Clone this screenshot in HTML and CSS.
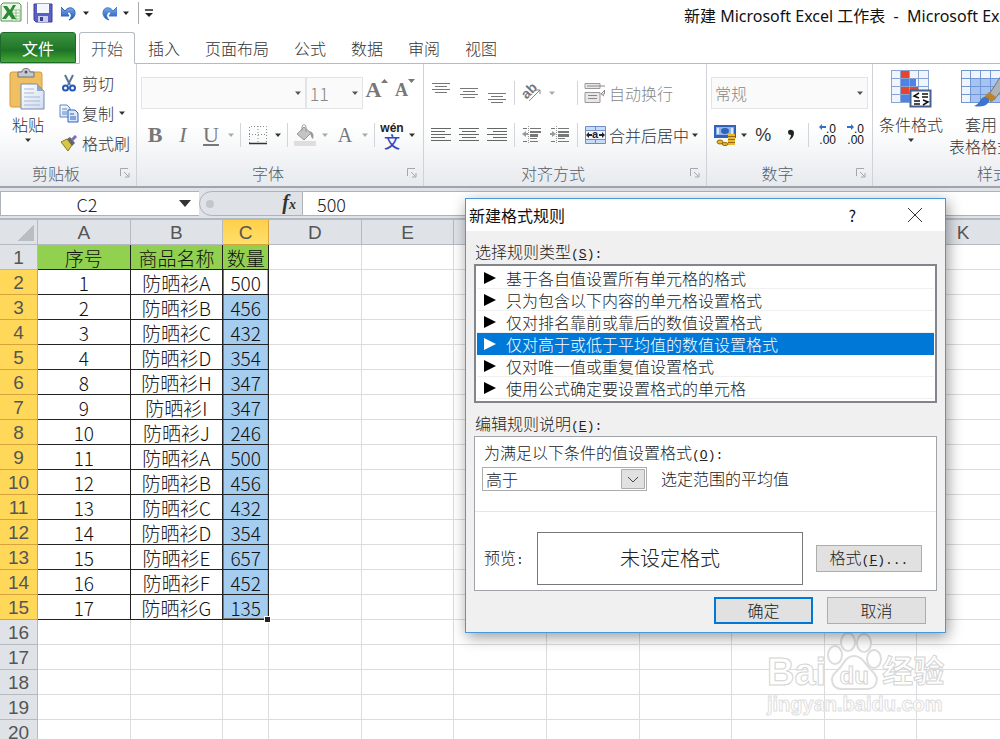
FILE: index.html
```
<!DOCTYPE html>
<html lang="zh-CN">
<head>
    <meta charset="UTF-8">
    <meta name="viewport" content="width=device-width, initial-scale=1.0">
    <title>新建 Microsoft Excel 工作表</title>
    <link rel="stylesheet" href="styles.css">
</head>
<body>
    <!-- shared shapes -->
    <svg class="defs" width="0" height="0">
        <defs>
            <symbol id="arrow" viewBox="0 0 8 5"><path d="M1 .5h6L4 4z" fill="currentColor"/></symbol>
            <symbol id="launcher" viewBox="0 0 10 10"><path d="M.5 8V.5H8M4 4l4.5 4.5M9 5v4H5" fill="none" stroke="#a3a8af"/></symbol>
            <linearGradient id="blue" x1="0" y1="0" x2="0" y2="1"><stop offset="0" stop-color="#7fb0ee"/><stop offset="1" stop-color="#1d4fae"/></linearGradient>
            <linearGradient id="paper" x1="0" y1="0" x2="1" y2="1"><stop offset="0" stop-color="#fff"/><stop offset="1" stop-color="#cfdcf0"/></linearGradient>
        </defs>
    </svg>

    <header class="titlebar">
        <div class="quick">
            <svg width="22" height="22" viewBox="0 0 22 22">
                <path d="M3 1h16l2 2v16H1V3z" fill="#eef6ea" stroke="#4d9a4c"/>
                <path d="M12 8h8v11h-8z" fill="#fff" stroke="#8cbf86"/>
                <path d="M13 11h6M13 14h6M13 17h6M16 8v11" stroke="#8cbf86"/>
                <path d="M3 4h4l3 4 3-5h3l-4 7 4 7h-4l-3-4-3 4H2l5-7z" fill="#2c8a34"/>
            </svg>
            <span class="bar"></span>
            <button type="button" aria-label="保存"><svg width="20" height="20" viewBox="0 0 20 20">
                <path d="M1 1h18v18H3l-2-2z" fill="#5a5fc4" stroke="#3d3f94"/>
                <path d="M4 1h12v9H4z" fill="#f2f6fd"/>
                <path d="M5 13h10v6H5z" fill="#c9cfe8"/>
                <path d="M7 14h3v4H7z" fill="#3d3f94"/>
            </svg></button>
            <button type="button" class="arc" aria-label="撤消"><svg width="16" height="18" viewBox="0 0 16 18">
                <path d="M4 7c3-5 10-4 10 2 0 3-2 6-6 7 2-2 3-4 2-6-1-3-3-2-4-1l2 3H0V3z" fill="url(#blue)" stroke="#2f64b8"/>
            </svg></button>
            <svg class="caret" width="8" height="5"><use href="#arrow"/></svg>
            <button type="button" class="arc" aria-label="恢复"><svg width="16" height="18" viewBox="0 0 16 18">
                <path d="M12 7C9 2 2 3 2 9c0 3 2 6 6 7-2-2-3-4-2-6 1-3 3-2 4-1l-2 3h8V3z" fill="url(#blue)" stroke="#3f7bcf"/>
            </svg></button>
            <svg class="caret" width="8" height="5"><use href="#arrow"/></svg>
            <span class="bar"></span>
            <svg width="10" height="8" viewBox="0 0 10 8"><path d="M1 1h8" stroke="#222" stroke-width="1.5"/><path d="M1 4h8L5 8z" fill="#222"/></svg>
        </div>
        <h1>新建 Microsoft Excel 工作表 &nbsp;-&nbsp; Microsoft Excel</h1>
    </header>

    <nav class="tabs">
        <button type="button" class="tab file">文件</button>
        <button type="button" class="tab active">开始</button>
        <button type="button" class="tab">插入</button>
        <button type="button" class="tab">页面布局</button>
        <button type="button" class="tab">公式</button>
        <button type="button" class="tab">数据</button>
        <button type="button" class="tab">审阅</button>
        <button type="button" class="tab">视图</button>
    </nav>

    <div class="ribbon">
        <section class="group clipboard">
            <div class="group-body split">
                <button type="button" class="big">
                    <svg width="38" height="42" viewBox="0 0 38 42">
                        <rect x="1" y="4" width="32" height="35" rx="2" fill="#f0bf62" stroke="#d39b3c"/>
                        <path d="M9 4h4c0-5 8-5 8 0h4v5H9z" fill="#c5c9cf" stroke="#6e7177"/>
                        <circle cx="17" cy="4" r="1.5" fill="#555"/>
                        <path d="M12 16h16l7 7v18H12z" fill="url(#paper)" stroke="#7489ad"/>
                        <path d="M28 16v7h7z" fill="#8ea7cf"/>
                        <path d="M15 21h10M15 25h10M15 29h16M15 33h16M15 37h16" stroke="#a9b8d2"/>
                    </svg>
                    <span>粘贴</span>
                    <svg width="8" height="5"><use href="#arrow"/></svg>
                </button>
                <div class="stack">
                    <button type="button" class="line"><span class="ico"><svg width="14" height="18" viewBox="0 0 14 18">
                        <path d="M3 1l5 10M11 1L6 11" stroke="#5b7597" stroke-width="2"/>
                        <circle cx="3.500" cy="14" r="2.500" fill="none" stroke="#2458b8" stroke-width="2"/>
                        <circle cx="10.500" cy="14" r="2.500" fill="none" stroke="#2458b8" stroke-width="2"/>
                    </svg></span>剪切</button>
                    <button type="button" class="line"><span class="ico"><svg width="20" height="19" viewBox="0 0 20 19">
                        <path d="M1 1h7l3 3v9H1z" fill="url(#paper)" stroke="#5b86c4"/>
                        <path d="M3 5h5M3 8h5M3 10h5" stroke="#5b86c4"/>
                        <path d="M9 6h7l3 3v9H9z" fill="#dce8fa" stroke="#2e62b5"/>
                        <path d="M11 10h4M11 13h6M11 15h6" stroke="#2e62b5"/>
                    </svg></span>复制<svg class="after" width="8" height="5"><use href="#arrow"/></svg></button>
                    <button type="button" class="line"><span class="ico"><svg width="18" height="17" viewBox="0 0 18 17">
                        <path d="M1 7l6-3 5 6-4 6z" fill="#d8c548" stroke="#8a7a22"/>
                        <path d="M7 4l3-2 5 6-3 3z" fill="#666"/>
                        <path d="M12 5l4-4" stroke="#7f6cc0" stroke-width="3"/>
                    </svg></span>格式刷</button>
                </div>
            </div>
            <footer>剪贴板<svg width="10" height="10"><use href="#launcher"/></svg></footer>
        </section>

        <section class="group font">
            <div class="group-body">
                <div class="tools">
                    <button type="button" class="combo name" aria-label="字体"><span></span><svg width="8" height="5"><use href="#arrow"/></svg></button>
                    <button type="button" class="combo size" aria-label="字号"><span>11</span><svg width="8" height="5"><use href="#arrow"/></svg></button>
                    <button type="button" class="tool letter large" aria-label="增大字号">A<svg width="7" height="4" viewBox="0 0 7 4"><path d="M0 4h7L3.500 0z" fill="#777"/></svg></button>
                    <button type="button" class="tool letter small" aria-label="减小字号">A<svg width="7" height="4" viewBox="0 0 7 4"><path d="M0 0h7L3.500 4z" fill="#777"/></svg></button>
                </div>
                <div class="tools">
                    <button type="button" class="tool letter"><b>B</b></button>
                    <button type="button" class="tool letter"><i>I</i></button>
                    <button type="button" class="tool letter"><u>U</u></button>
                    <span class="drop dim"><svg width="8" height="5"><use href="#arrow"/></svg></span>
                    <span class="bar"></span>
                    <button type="button" class="tool" aria-label="边框"><svg width="18" height="19" viewBox="0 0 18 19">
                        <path d="M.5 17V.5h17V17M9 0v17M0 8.500h18" fill="none" stroke="#888" stroke-dasharray="1 2"/>
                        <path d="M0 17.500h18" stroke="#333" stroke-width="1.500"/>
                    </svg></button>
                    <span class="drop"><svg width="8" height="5"><use href="#arrow"/></svg></span>
                    <span class="bar"></span>
                    <button type="button" class="tool" aria-label="填充颜色"><svg width="22" height="22" viewBox="0 0 22 22">
                        <path d="M0 17h22v5H0z" fill="#e2dce1"/>
                        <path d="M3 10l7-7 7 6-7 7z" fill="#c4c4c4" stroke="#999"/>
                        <path d="M8 7V3c0-3 4-3 4 0v5" fill="none" stroke="#999"/>
                        <path d="M15 7c5 1 5 5 4 8-2-1-2-4-4-8z" fill="#999"/>
                    </svg></button>
                    <span class="drop dim"><svg width="8" height="5"><use href="#arrow"/></svg></span>
                    <button type="button" class="tool letter plain">A</button>
                    <span class="drop dim"><svg width="8" height="5"><use href="#arrow"/></svg></span>
                    <span class="bar"></span>
                    <button type="button" class="tool pinyin"><span>wén</span><em>文</em></button>
                    <span class="drop"><svg width="8" height="5"><use href="#arrow"/></svg></span>
                </div>
            </div>
            <footer>字体<svg width="10" height="10"><use href="#launcher"/></svg></footer>
        </section>

        <section class="group align">
            <div class="group-body">
                <div class="tools">
                    <button type="button" class="tool" aria-label="顶端对齐"><svg width="20" height="22" viewBox="0 0 20 22"><path d="M1 1.500h18M4 4.500h12M1 7.500h18M4 10.500h12" stroke="#777"/></svg></button>
                    <button type="button" class="tool" aria-label="垂直居中"><svg width="20" height="22" viewBox="0 0 20 22"><path d="M1 6.500h18M4 9.500h12M1 12.500h18M4 15.500h12" stroke="#777"/></svg></button>
                    <button type="button" class="tool" aria-label="底端对齐"><svg width="20" height="22" viewBox="0 0 20 22"><path d="M1 11.500h18M4 14.500h12M1 17.500h18M4 20.500h12" stroke="#777"/></svg></button>
                    <span class="bar"></span>
                    <span class="pair">
                        <button type="button" class="tool" aria-label="方向"><svg width="20" height="20" viewBox="0 0 20 20">
                            <g transform="rotate(-45 8 9)"><text x="0" y="12" font-size="14" font-weight="700" font-family="Liberation Sans, sans-serif" fill="#777">ab</text></g>
                            <path d="M7 18L18 7M14 7h4v4" fill="none" stroke="#888"/>
                        </svg></button>
                        <span class="drop dim"><svg width="8" height="5"><use href="#arrow"/></svg></span>
                    </span>
                    <span class="bar"></span>
                    <button type="button" class="wide muted"><span class="tool"><svg width="22" height="22" viewBox="0 0 22 22">
                        <path d="M1 1.500h15v5H1zM1 10.500h15v10H1z" fill="#ece6ec" stroke="#999"/>
                        <path d="M3 4h18M20.500 8v4h-2M20 9l-3 3 3 2M4 13.500h9M4 16.500h9" fill="none" stroke="#888"/>
                    </svg></span>自动换行</button>
                </div>
                <div class="tools">
                    <button type="button" class="tool" aria-label="左对齐"><svg width="20" height="16" viewBox="0 0 20 16"><path d="M0 1.500h20M0 4.500h14M0 7.500h20M0 10.500h14M0 13.500h20" stroke="#666"/></svg></button>
                    <button type="button" class="tool" aria-label="居中"><svg width="20" height="16" viewBox="0 0 20 16"><path d="M0 1.500h20M3 4.500h14M0 7.500h20M3 10.500h14M0 13.500h20" stroke="#666"/></svg></button>
                    <button type="button" class="tool" aria-label="右对齐"><svg width="20" height="16" viewBox="0 0 20 16"><path d="M0 1.500h20M6 4.500h14M0 7.500h20M6 10.500h14M0 13.500h20" stroke="#666"/></svg></button>
                    <span class="bar"></span>
                    <button type="button" class="tool" aria-label="减少缩进"><svg width="20" height="18" viewBox="0 0 20 18">
                        <path d="M1 2.500h4M8 2.500h11M8 12.500h7M1 15.500h4M8 15.500h8" stroke="#777"/>
                        <path d="M8 5h11v2H8zM8 8h8v3H8z" fill="#777"/><path d="M0 8l4-3v2h2v2H4v2z" fill="#999"/><path d="M6.500 0v18" stroke="#999" stroke-dasharray="1 1"/>
                    </svg></button>
                    <button type="button" class="tool" aria-label="增加缩进"><svg width="20" height="18" viewBox="0 0 20 18">
                        <path d="M1 2.500h4M8 2.500h11M8 12.500h7M1 15.500h4M8 15.500h11" stroke="#777"/>
                        <path d="M8 5h11v2H8zM8 8h11v3H8z" fill="#777"/><path d="M6 8L2 5v2H0v2h2v2z" fill="#999"/><path d="M6.500 0v18" stroke="#999" stroke-dasharray="1 1"/>
                    </svg></button>
                    <span class="bar"></span>
                    <button type="button" class="wide"><span class="tool"><svg width="21" height="18" viewBox="0 0 21 18">
                        <path d="M.5 .5h20v17H.5z" fill="#c8dcf5" stroke="#6f8fc4"/>
                        <path d="M10.500 0v5M10.500 13v5M0 4.500h21M0 13.500h21" stroke="#6f8fc4"/>
                        <path d="M1 5h19v8H1z" fill="#eef5ff"/>
                        <path d="M1 9l3-3v2h3v2H4v2zM20 9l-3-3v2h-3v2h3v2z" fill="#223"/>
                        <text x="7" y="12" font-size="11" font-weight="700" font-family="Liberation Sans, sans-serif" fill="#223">a</text>
                    </svg></span>合并后居中</button>
                    <span class="drop"><svg width="8" height="5"><use href="#arrow"/></svg></span>
                </div>
            </div>
            <footer>对齐方式<svg width="10" height="10"><use href="#launcher"/></svg></footer>
        </section>

        <section class="group number">
            <div class="group-body">
                <div class="tools">
                    <button type="button" class="combo format"><span>常规</span><svg width="8" height="5"><use href="#arrow"/></svg></button>
                </div>
                <div class="tools">
                    <button type="button" class="tool" aria-label="会计数字格式"><svg width="22" height="22" viewBox="0 0 22 22">
                        <path d="M0 1h22v13H0z" fill="#2f62b8"/><path d="M2 3h18v8H2z" fill="#8fb4e8"/>
                        <ellipse cx="11" cy="7" rx="4" ry="3" fill="#2f62b8"/><path d="M4 4v6M18 4v6" stroke="#dce9fb" stroke-width="2"/>
                        <path d="M14 10h7v11h-7z" fill="#e8b92c"/><path d="M14 12.500h7M14 15.500h7M14 18.500h7" stroke="#96690c"/>
                        <ellipse cx="6" cy="18" rx="3" ry="2" fill="#e8b92c" stroke="#96690c"/><ellipse cx="11" cy="20" rx="3" ry="1.500" fill="#e8b92c" stroke="#96690c"/>
                    </svg></button>
                    <span class="drop"><svg width="8" height="5"><use href="#arrow"/></svg></span>
                    <button type="button" class="tool percent">%</button>
                    <button type="button" class="tool" aria-label="千位分隔样式"><svg width="8" height="12" viewBox="0 0 8 12"><path d="M1 3c0-3 6-3 6 1 0 3-2 6-5 7 1-2 2-3 2-5-2 0-3-1-3-3z" fill="#222"/></svg></button>
                    <span class="bar"></span>
                    <button type="button" class="tool decimals"><span><svg width="7" height="6" viewBox="0 0 7 6"><path d="M0 3l3-3v2h4v2H3v2z" fill="#2f6fd0"/></svg>.0</span><span>.00</span></button>
                    <button type="button" class="tool decimals"><span><svg width="7" height="6" viewBox="0 0 7 6"><path d="M7 3L4 0v2H0v2h4v2z" fill="#2f6fd0"/></svg>.0</span><span>.00</span></button>
                </div>
            </div>
            <footer>数字<svg width="10" height="10"><use href="#launcher"/></svg></footer>
        </section>

        <section class="group styles">
            <div class="group-body split">
                <button type="button" class="big rules-button">
                    <svg width="42" height="42" viewBox="0 0 42 42">
                        <path d="M1 2h38v33H1z" fill="#f0f5fd"/>
                        <path d="M11 2h9v9h-9z" fill="#e8432e"/><path d="M11 11h15v8H11z" fill="#4f82e2"/>
                        <path d="M11 19h17v8H11z" fill="#e8432e"/><path d="M11 27h8v8h-8z" fill="#4f82e2"/>
                        <path d="M1.500 2v33M10.500 2v33M19.500 2v33M28.500 2v33M38.500 2v33M1 2.500h38M1 10.500h38M1 18.500h38M1 26.500h38M1 34.500h38" stroke="#87a4d3" fill="none"/>
                        <path d="M20.500 22.500h20v16h-20z" fill="#fff" stroke="#44618f" stroke-width="2"/>
                        <path d="M29 25l-5 3 5 2M32 26h6M32 29h6M33 32l5 2-5 3M24 33h6M24 36h6" fill="none" stroke="#111" stroke-width="1.500"/>
                    </svg>
                    <span>条件格式</span>
                    <svg width="8" height="5"><use href="#arrow"/></svg>
                </button>
                <button type="button" class="big format-button">
                    <svg width="42" height="42" viewBox="0 0 42 42">
                        <path d="M1 2h41v33H1z" fill="#f0f5fd"/><path d="M11 11h31v24H11z" fill="#a6c4f3"/>
                        <path d="M1.500 2v33M10.500 2v33M20.500 2v33M30.500 2v33M40.500 2v33M1 2.500h41M1 10.500h41M1 18.500h41M1 26.500h41M1 34.500h41" stroke="#7096d4" fill="none"/>
                        <path d="M28 28L41 8v15l-7 9z" fill="#aeb3b8" stroke="#777"/>
                        <path d="M24 29l5-5 7 5-4 5z" fill="#b8832c"/>
                        <path d="M14 38c6-2 6-8 10-9 4 0 7 3 4 6-3 4-9 4-14 3z" fill="#3d74cd"/>
                    </svg>
                    <span>套用<br>表格格式</span>
                </button>
            </div>
            <footer>样式</footer>
        </section>
    </div>

    <div class="formula-bar">
        <div class="name-box">
            <input type="text" value="C2" aria-label="名称框">
            <svg width="12" height="7" viewBox="0 0 12 7"><path d="M0 0h12L6 7z" fill="#333"/></svg>
        </div>
        <div class="fx"><span class="knob"></span><i>f<small>x</small></i></div>
        <input class="formula" type="text" value="500" aria-label="编辑栏">
    </div>

    <main class="sheet">
        <table>
            <colgroup>
                <col class="c-head"><col class="c-wide"><col class="c-wide"><col class="c-narrow">
                <col class="c-wide" span="8">
            </colgroup>
            <thead>
                <tr><th class="corner"></th><th>A</th><th>B</th><th class="on">C</th><th>D</th><th>E</th><th>F</th><th>G</th><th>H</th><th>I</th><th>J</th><th>K</th></tr>
            </thead>
            <tbody>
                <tr class="titles"><th>1</th><td>序号</td><td>商品名称</td><td>数量</td><td></td><td></td><td></td><td></td><td></td><td></td><td></td><td></td></tr>
                <tr class="data first"><th>2</th><td>1</td><td>防晒衫A</td><td>500</td><td></td><td></td><td></td><td></td><td></td><td></td><td></td><td></td></tr>
                <tr class="data"><th>3</th><td>2</td><td>防晒衫B</td><td>456</td><td></td><td></td><td></td><td></td><td></td><td></td><td></td><td></td></tr>
                <tr class="data"><th>4</th><td>3</td><td>防晒衫C</td><td>432</td><td></td><td></td><td></td><td></td><td></td><td></td><td></td><td></td></tr>
                <tr class="data"><th>5</th><td>4</td><td>防晒衫D</td><td>354</td><td></td><td></td><td></td><td></td><td></td><td></td><td></td><td></td></tr>
                <tr class="data"><th>6</th><td>8</td><td>防晒衫H</td><td>347</td><td></td><td></td><td></td><td></td><td></td><td></td><td></td><td></td></tr>
                <tr class="data"><th>7</th><td>9</td><td>防晒衫I</td><td>347</td><td></td><td></td><td></td><td></td><td></td><td></td><td></td><td></td></tr>
                <tr class="data"><th>8</th><td>10</td><td>防晒衫J</td><td>246</td><td></td><td></td><td></td><td></td><td></td><td></td><td></td><td></td></tr>
                <tr class="data"><th>9</th><td>11</td><td>防晒衫A</td><td>500</td><td></td><td></td><td></td><td></td><td></td><td></td><td></td><td></td></tr>
                <tr class="data"><th>10</th><td>12</td><td>防晒衫B</td><td>456</td><td></td><td></td><td></td><td></td><td></td><td></td><td></td><td></td></tr>
                <tr class="data"><th>11</th><td>13</td><td>防晒衫C</td><td>432</td><td></td><td></td><td></td><td></td><td></td><td></td><td></td><td></td></tr>
                <tr class="data"><th>12</th><td>14</td><td>防晒衫D</td><td>354</td><td></td><td></td><td></td><td></td><td></td><td></td><td></td><td></td></tr>
                <tr class="data"><th>13</th><td>15</td><td>防晒衫E</td><td>657</td><td></td><td></td><td></td><td></td><td></td><td></td><td></td><td></td></tr>
                <tr class="data"><th>14</th><td>16</td><td>防晒衫F</td><td>452</td><td></td><td></td><td></td><td></td><td></td><td></td><td></td><td></td></tr>
                <tr class="data last"><th>15</th><td>17</td><td>防晒衫G</td><td>135<span class="handle"></span></td><td></td><td></td><td></td><td></td><td></td><td></td><td></td><td></td></tr>
                <tr><th>16</th><td></td><td></td><td></td><td></td><td></td><td></td><td></td><td></td><td></td><td></td><td></td></tr>
                <tr><th>17</th><td></td><td></td><td></td><td></td><td></td><td></td><td></td><td></td><td></td><td></td><td></td></tr>
                <tr><th>18</th><td></td><td></td><td></td><td></td><td></td><td></td><td></td><td></td><td></td><td></td><td></td></tr>
                <tr><th>19</th><td></td><td></td><td></td><td></td><td></td><td></td><td></td><td></td><td></td><td></td><td></td></tr>
                <tr><th>20</th><td></td><td></td><td></td><td></td><td></td><td></td><td></td><td></td><td></td><td></td><td></td></tr>
            </tbody>
        </table>
    </main>

    <div class="watermark">
        <div class="brand">
            <span>Bai</span>
            <span class="paw">
                <svg width="56" height="60" viewBox="0 0 56 60" fill="#fff" stroke="#ddd" stroke-width="2">
                    <ellipse cx="9" cy="23" rx="7" ry="9"/><ellipse cx="22" cy="10" rx="7" ry="9"/>
                    <ellipse cx="38" cy="11" rx="7" ry="9"/><ellipse cx="48" cy="27" rx="7" ry="9"/>
                    <path d="M28 24c9 0 11 9 18 15 9 8 4 18-5 18H16C6 57 2 46 11 39c7-6 8-15 17-15z"/>
                </svg>
                <em>du</em>
            </span>
            <span>经验</span>
        </div>
        <div class="site">jingyan.baidu.com</div>
    </div>

    <div class="dialog" role="dialog" aria-labelledby="dialog-title">
        <div class="dialog-title">
            <h2 id="dialog-title">新建格式规则</h2>
            <button type="button">?</button>
            <button type="button" aria-label="关闭"><svg width="14" height="14" viewBox="0 0 14 14"><path d="M0 0l14 14M14 0L0 14" stroke="#333"/></svg></button>
        </div>
        <div class="dialog-body">
            <p id="type-label">选择规则类型<span class="key">(<u>S</u>):</span></p>
            <ul class="rules" role="listbox" aria-labelledby="type-label">
                <li role="option">基于各自值设置所有单元格的格式</li>
                <li role="option">只为包含以下内容的单元格设置格式</li>
                <li role="option">仅对排名靠前或靠后的数值设置格式</li>
                <li role="option" aria-selected="true" class="selected">仅对高于或低于平均值的数值设置格式</li>
                <li role="option">仅对唯一值或重复值设置格式</li>
                <li role="option">使用公式确定要设置格式的单元格</li>
            </ul>
            <p>编辑规则说明<span class="key">(<u>E</u>):</span></p>
            <div class="rule-edit">
                <div class="condition">
                    <label for="compare">为满足以下条件的值设置格式<span class="key">(<u>O</u>):</span></label>
                    <div class="compare">
                        <span class="select">
                            <select id="compare"><option>高于</option><option>低于</option></select>
                            <svg width="24" height="20" viewBox="0 0 24 20"><path d="M.5 .5h23v19H.5z" fill="#e1e1e1" stroke="#adadad"/><path d="M7 8l5 5 5-5" fill="none" stroke="#444"/></svg>
                        </span>
                        <span>选定范围的平均值</span>
                    </div>
                </div>
                <div class="preview">
                    <span>预览<span class="key">:</span></span>
                    <output>未设定格式</output>
                    <button type="button" class="btn">格式<span class="key">(<u>F</u>)...</span></button>
                </div>
            </div>
            <div class="actions">
                <button type="button" class="btn primary">确定</button>
                <button type="button" class="btn">取消</button>
            </div>
        </div>
    </div>
</body>
</html>
```
FILE: styles.css
```
* {
    margin: 0;
    padding: 0;
    box-sizing: border-box;
}

body {
    height: 100vh;
    display: flex;
    flex-direction: column;
    overflow: hidden;
    position: relative;
    background: #fff;
    color: #333;
    font-family: "Noto Sans CJK SC", sans-serif;
    font-size: 16px;
    font-weight: 300;
    line-height: 22px;
}

button, input, select {
    font: inherit;
    color: inherit;
    background: none;
    border: none;
    border-radius: 0;
}

b {
    font-weight: 700;
}

svg {
    display: block;
    flex: none;
}

.defs {
    position: absolute;
}

/* title bar */
.titlebar {
    flex: none;
    height: 32px;
    display: flex;
    justify-content: space-between;
    overflow: hidden;
}

.quick {
    display: flex;
    align-items: center;
    gap: 5px;
    height: 26px;
    color: #222;
}

.quick .bar {
    height: 22px;
    margin: 0;
    background: #aaa;
}

.quick .arc {
    margin-left: 3px;
}

.quick .caret {
    margin-right: 3px;
}

.titlebar h1 {
    width: 316px;
    font-family: "Noto Sans", "Noto Sans CJK SC", sans-serif;
    font-size: 16px;
    font-weight: 400;
    line-height: 32px;
    color: #111;
    white-space: nowrap;
}

/* tabs */
.tabs {
    flex: none;
    display: flex;
    gap: 1px;
    height: 31px;
}

.tab {
    height: 32px;
    padding: 0 12px;
    border: 1px solid transparent;
    border-width: 1px 0;
}

.tab.file {
    width: 76px;
    height: 31px;
    margin-right: 2px;
    color: #fff;
    font-weight: 400;
    background: linear-gradient(#3c9440, #1f7326 60%, #45a832);
    border: 1px solid #1c6b2a;
    border-radius: 3px 3px 0 0;
}

.tab.active {
    position: relative;
    background: #fff;
    border: 1px solid #b6bac1;
    border-bottom-color: #fff;
    border-radius: 3px 3px 0 0;
    padding: 0 11px;
    color: #444b55;
}

/* ribbon */
.ribbon {
    flex: none;
    display: flex;
    height: 125px;
    overflow: hidden;
    background: linear-gradient(#fff 50%, #e7eaee);
    border-top: 1px solid #b6bac1;
    border-bottom: 2px solid #a0a5ac;
}

.group {
    flex: none;
    display: flex;
    flex-direction: column;
    border-right: 1px solid #cfd2d7;
}

.clipboard {
    width: 137px;
}

.font {
    width: 287px;
}

.align {
    width: 283px;
}

.number {
    width: 166px;
}

.styles {
    flex: 1 0 220px;
    border-right: none;
}

.group-body {
    height: 98px;
    padding: 13px 4px 0;
    display: flex;
    flex-direction: column;
    gap: 10px;
}

.align .group-body {
    padding: 13px 3px 0;
}

.group-body.split {
    flex-direction: row;
    gap: 0;
    padding: 4px 0 0;
}

.group footer {
    position: relative;
    height: 24px;
    text-align: center;
    color: #555c66;
    padding-right: 24px;
}

.group footer svg {
    position: absolute;
    right: 6px;
    top: 6px;
}

.styles footer {
    padding: 0;
    padding-left: 20px;
}

.big {
    width: 56px;
    display: flex;
    flex-direction: column;
    align-items: center;
    justify-content: flex-start;
    gap: 3px;
}

.rules-button {
    width: 76px;
    white-space: nowrap;
}

.format-button {
    width: 64px;
    white-space: nowrap;
}

.stack {
    flex: 1;
}

.line {
    display: flex;
    align-items: center;
    height: 30px;
    white-space: nowrap;
}

.ico {
    width: 26px;
    display: flex;
    justify-content: center;
}

.after {
    margin-left: 4px;
}

.tools {
    display: flex;
    align-items: center;
    height: 32px;
}

.tool {
    flex: none;
    width: 28px;
    height: 28px;
    display: flex;
    align-items: center;
    justify-content: center;
}

.drop {
    width: 12px;
    display: flex;
    justify-content: center;
}

.dim {
    color: #aaa;
}

.bar {
    width: 1px;
    height: 24px;
    margin: 0 3px;
    background: #d3d5d9;
}

.pair {
    width: 56px;
    display: flex;
    align-items: center;
}

.wide {
    display: flex;
    align-items: center;
    white-space: nowrap;
}

.muted {
    color: #888;
}

.combo {
    height: 32px;
    display: flex;
    align-items: center;
    justify-content: space-between;
    padding: 0 3px;
    background: #fafafa;
    border: 1px solid #e3e4e6;
    color: #888;
}

.combo svg {
    color: #555;
}

.combo.name {
    width: 167px;
}

.combo.size {
    width: 58px;
    font-size: 18px;
}

.combo.format {
    width: 157px;
}

.letter {
    font-family: "Liberation Serif", serif;
    font-size: 22px;
    color: #777;
}

.large, .small {
    align-items: flex-start;
    font-weight: 700;
}

.small {
    font-size: 18px;
}

.plain {
    font-size: 20px;
}

.pinyin {
    flex-direction: column;
    font-family: "Liberation Sans", sans-serif;
    font-size: 12px;
    line-height: 12px;
    font-weight: 700;
    color: #222;
}

.pinyin em {
    font-family: "Noto Sans CJK SC", sans-serif;
    font-style: normal;
    font-weight: 500;
    font-size: 16px;
    line-height: 14px;
    color: #2f49c0;
}

.percent {
    font-family: "Liberation Sans", sans-serif;
    font-size: 18px;
}

.decimals {
    flex-direction: column;
    align-items: flex-end;
    padding-right: 4px;
    font-family: "Liberation Sans", sans-serif;
    font-size: 12px;
    line-height: 11px;
    color: #111;
}

.decimals span {
    display: flex;
}

/* formula bar */
.formula-bar {
    flex: none;
    display: flex;
    height: 32px;
    padding: 3px 0 2px;
    background: #dfe3e8;
    border-bottom: 2px solid #b3b9c2;
    font-size: 18px;
}

.name-box {
    width: 199px;
    display: flex;
    align-items: center;
    gap: 6px;
    background: #fff;
    border: 1px solid #aeb3ba;
    border-right: none;
    padding-right: 8px;
}

.name-box input {
    flex: 1;
    min-width: 0;
    text-align: center;
    color: #222;
}

.fx {
    width: 104px;
    display: flex;
    align-items: center;
    justify-content: space-between;
    padding: 0 6px;
    border: 1px solid #aeb3ba;
    border-radius: 13px 0 0 13px;
    font-family: "Liberation Serif", serif;
    font-size: 20px;
    font-weight: 700;
}

.fx small {
    font-size: 14px;
}

.knob {
    width: 8px;
    height: 8px;
    border-radius: 50%;
    background: #c3c7cd;
}

.formula {
    flex: 1;
    min-width: 0;
    padding-left: 14px;
    background: #fff;
    border-top: 1px solid #aeb3ba;
    border-bottom: 1px solid #aeb3ba;
    color: #222;
}

/* worksheet */
.sheet {
    flex: 1;
    min-height: 0;
    overflow: hidden;
}

table {
    width: 1010px;
    min-width: 100%;
    table-layout: fixed;
    border-collapse: separate;
    border-spacing: 0;
    font-size: 19px;
    line-height: 22px;
    color: #111;
}

.c-head {
    width: 38px;
}

.c-narrow {
    width: 46px;
}

th, td {
    height: 25px;
    padding-top: 2px;
    font-weight: 300;
    text-align: center;
    white-space: nowrap;
    border-right: 1px solid #dcdcde;
    border-bottom: 1px solid #dcdcde;
}

th {
    background: #dfe3e8;
    border-color: #b5bac1;
    color: #555;
    font-family: "Liberation Sans", sans-serif;
}

.corner {
    background: linear-gradient(135deg, transparent 50%, #b9bec5 50%) right 3px bottom 3px / 17px 17px no-repeat #dfe3e8;
}

.on {
    background: linear-gradient(#ffcf4a, #ffe06a);
    border-color: #d9a33c;
}

.titles td:nth-child(-n+4) {
    background: #92d050;
    border-color: #222;
}

.data th {
    background: #ffd85a;
    border-color: #d9a33c;
}

.data td:nth-child(-n+4) {
    border-color: #222;
}

.data td:nth-child(4) {
    position: relative;
    background: #a5cdef;
    box-shadow: inset 1px 0 #777, inset -1px 0 #aaa;
}

.data.first td:nth-child(4) {
    background: #fff;
}

.data.last td:nth-child(4) {
    box-shadow: inset 1px 0 #777, inset -1px 0 #aaa, inset 0 -1px #777;
}

.handle {
    position: absolute;
    right: -2px;
    bottom: -3px;
    width: 5px;
    height: 5px;
    background: #222;
    outline: 1px solid #fff;
}

/* watermark */
.watermark {
    position: absolute;
    left: 767px;
    top: 632px;
    color: #fff;
    -webkit-text-stroke: 1px #d4d4d4;
    font-family: "Liberation Sans", "Noto Sans CJK SC", sans-serif;
    font-weight: 700;
}

.brand {
    display: flex;
    align-items: flex-end;
    height: 60px;
    font-size: 38px;
    line-height: 40px;
}

.brand span:last-child {
    font-size: 31px;
    line-height: 40px;
}

.paw {
    position: relative;
}

.paw em {
    position: absolute;
    left: 0;
    right: 0;
    bottom: 0;
    text-align: center;
    font-style: normal;
    font-size: 24px;
    line-height: 32px;
}

.site {
    font-size: 20px;
    line-height: 24px;
    -webkit-text-stroke-color: #e0e0e0;
}

/* dialog */
.dialog {
    position: absolute;
    left: 465px;
    top: 198px;
    width: 481px;
    background: #f0f0f0;
    border: 1px solid #4a98dc;
    box-shadow: 2px 4px 14px rgba(0,0,0,0.4);
    color: #222;
}

.dialog-title {
    display: flex;
    align-items: center;
    height: 32px;
    padding: 0 23px 0 3px;
    gap: 52px;
    background: #fff;
    color: #111;
}

.dialog-title h2 {
    flex: 1;
    font-size: 16px;
    font-weight: 400;
}

.dialog-title button {
    font-weight: 400;
}

.dialog-body {
    padding: 9px 8px 8px;
}

.dialog-body p {
    height: 24px;
    padding-left: 1px;
}

.key {
    font-family: "Liberation Mono", monospace;
    font-size: 13px;
}

.rules {
    list-style: none;
    height: 139px;
    margin-bottom: 9px;
    background: #fff;
    border: 2px solid #82858b;
    padding: 1px;
}

.rules li {
    display: flex;
    align-items: center;
    height: 22px;
    padding-left: 7px;
    gap: 10px;
    line-height: 18px;
    border-bottom: 1px solid #f0f0f0;
}

.rules li::before {
    content: "";
    border-left: 12px solid #000;
    border-top: 6px solid transparent;
    border-bottom: 6px solid transparent;
}

.rules .selected {
    background: #0078d7;
    border-color: #0078d7;
    color: #fff;
}

.rules .selected::before {
    border-left-color: #fff;
}

.rule-edit {
    height: 155px;
    background: #fff;
    border: 1px solid #a0a3a8;
}

.condition {
    height: 75px;
    padding: 4px 7px;
    border-bottom: 1px solid #e6e6e6;
}

.condition label {
    display: block;
    padding-left: 2px;
    height: 26px;
}

.compare {
    display: flex;
    gap: 14px;
}

.select {
    position: relative;
    width: 165px;
    height: 24px;
    border: 1px solid #adadad;
}

.select select {
    display: block;
    width: 100%;
    height: 20px;
    padding-left: 3px;
    appearance: none;
}

.select svg {
    position: absolute;
    right: 1px;
    top: 1px;
    pointer-events: none;
}

.preview {
    display: flex;
    align-items: center;
    height: 78px;
    padding: 15px 14px 0 9px;
    gap: 13px;
}

.preview output {
    flex: 1;
    height: 53px;
    line-height: 50px;
    text-align: center;
    font-size: 20px;
    border: 1px solid #777;
}

.btn {
    height: 27px;
    padding-bottom: 2px;
    background: #e1e1e1;
    border: 1px solid #adadad;
}

.preview .btn {
    width: 106px;
}

.actions {
    display: flex;
    justify-content: flex-end;
    gap: 14px;
    padding: 6px 11px 0;
}

.actions .btn {
    width: 99px;
}

.btn.primary {
    border: 2px solid #0078d7;
}
```
